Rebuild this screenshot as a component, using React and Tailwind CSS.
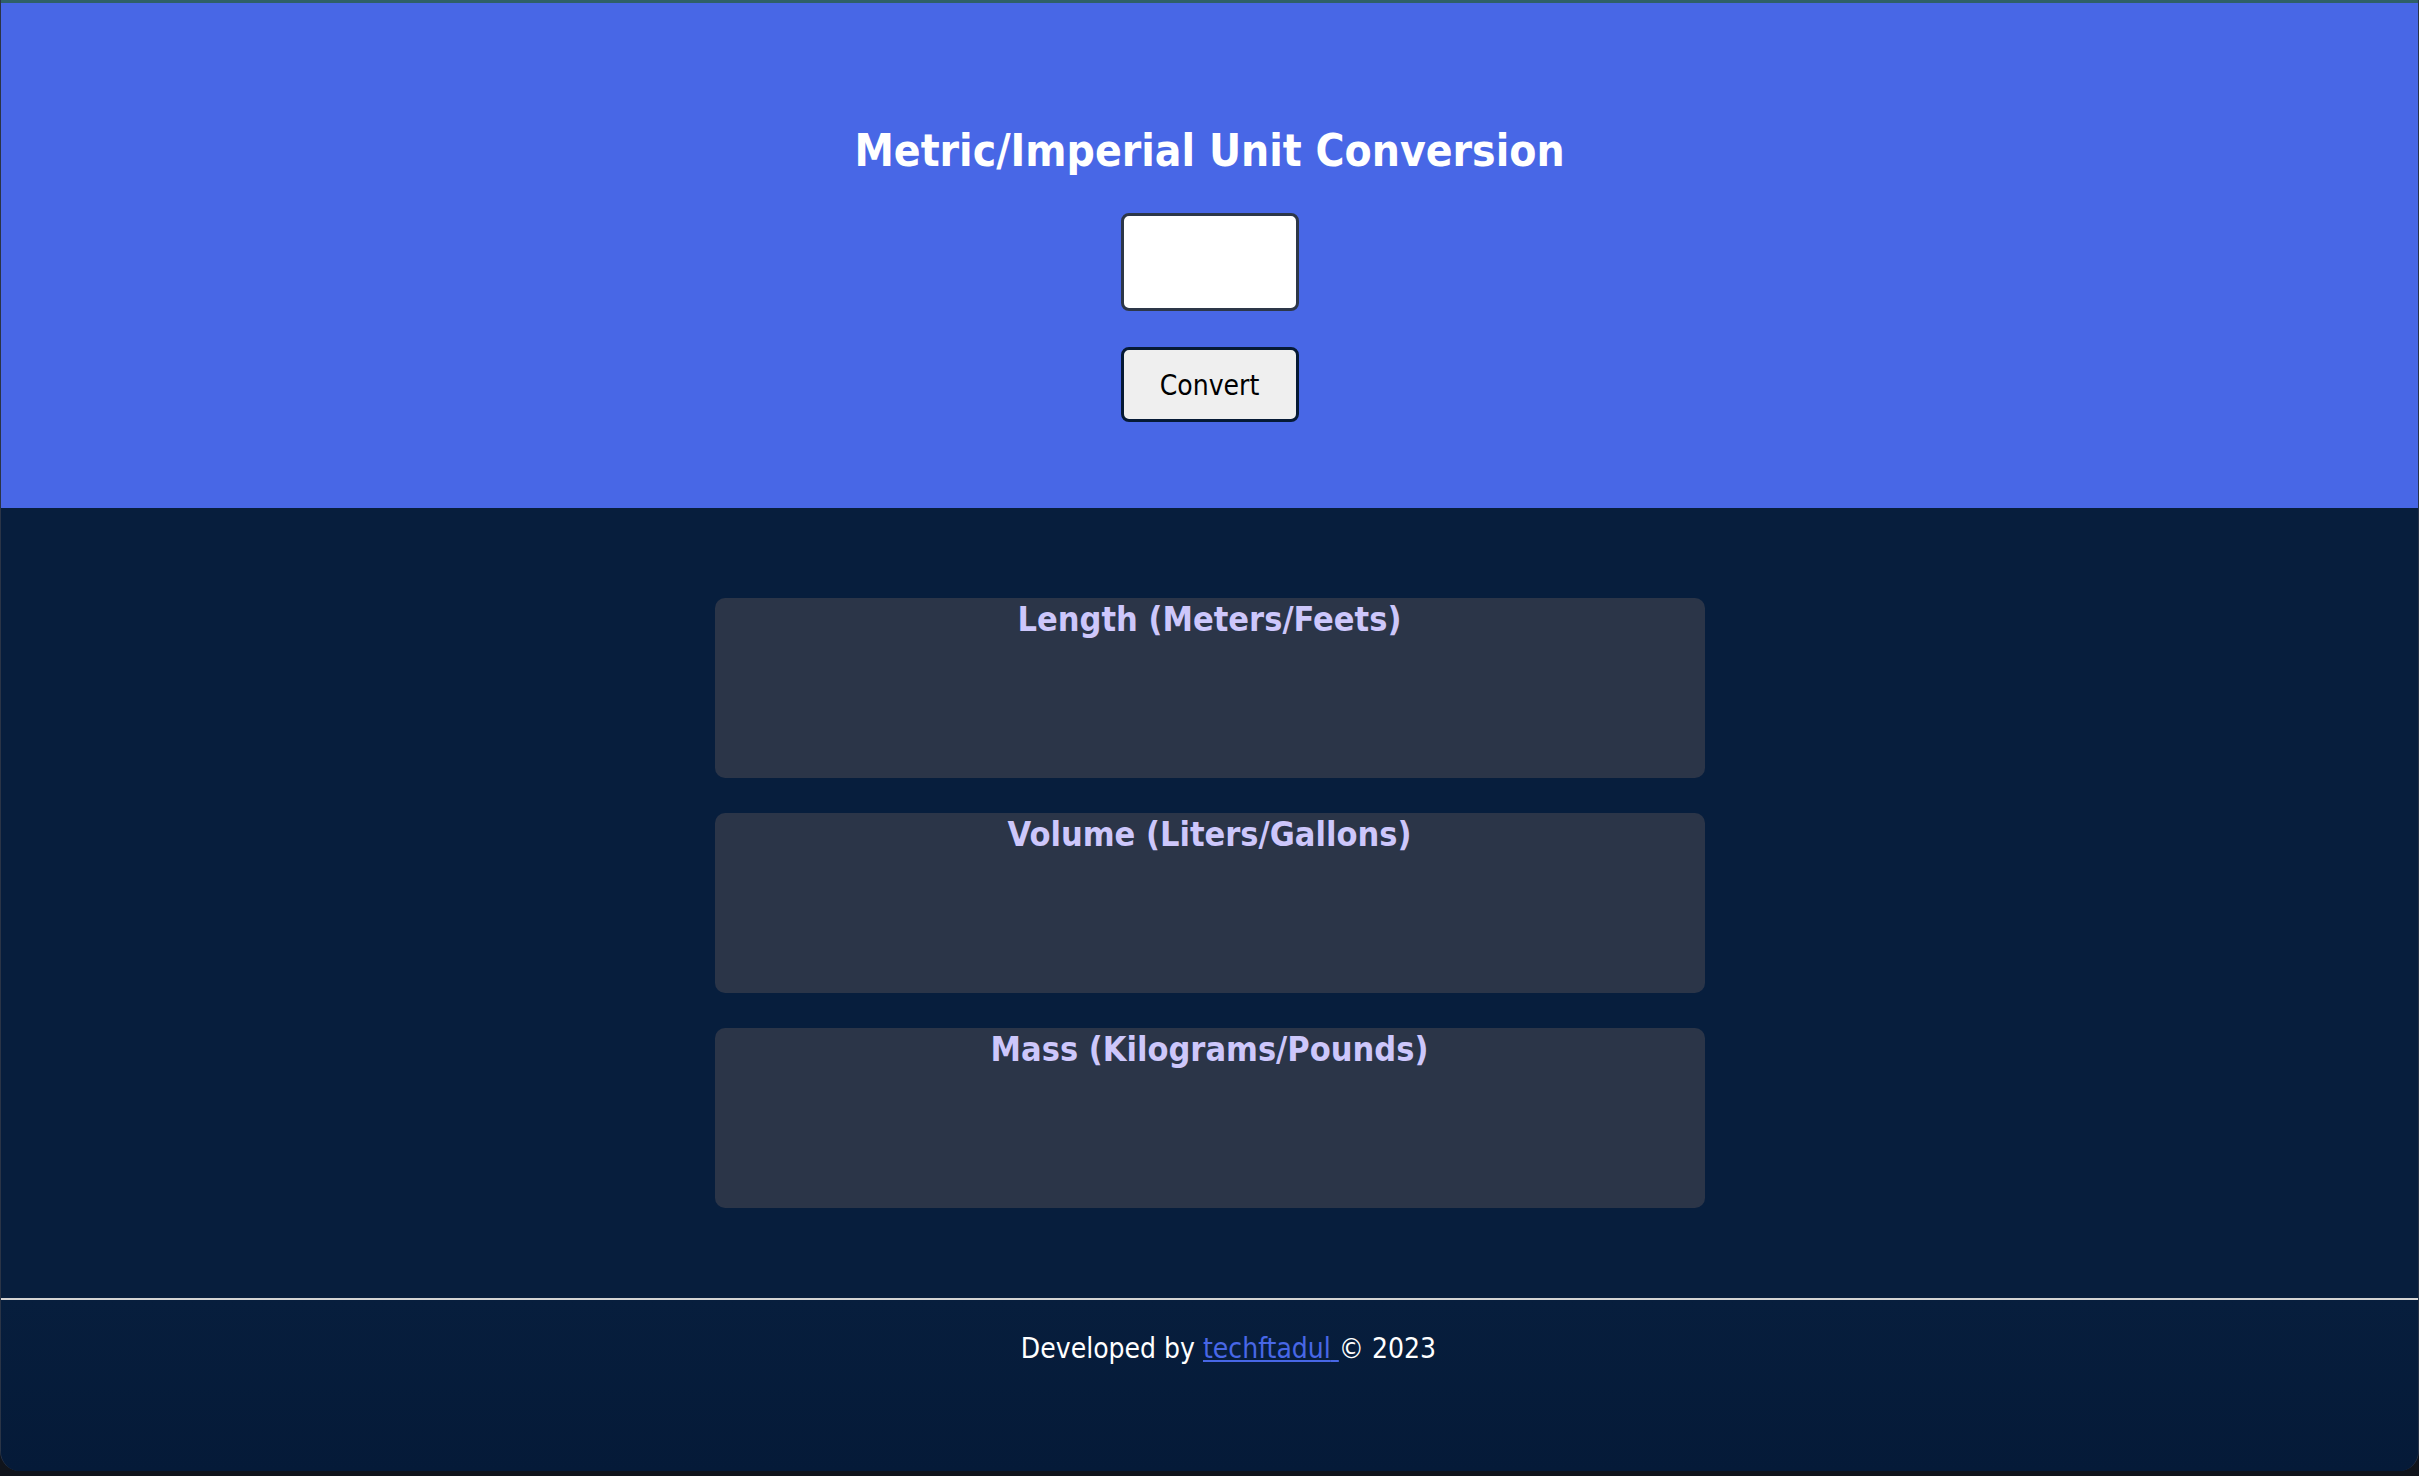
export default function App() {
  const cards = [
    "Length (Meters/Feets)",
    "Volume (Liters/Gallons)",
    "Mass (Kilograms/Pounds)",
  ];

  return (
    <div className="h-[1476px] w-full overflow-hidden bg-[#10141c] font-['DejaVu_Sans_Condensed','DejaVu_Sans',sans-serif]">
      <div className="flex h-[1471px] flex-col overflow-hidden rounded-b-[20px] border-x border-[#2a3446] bg-[#071e3d]">
        {/* window top edge */}
        <div className="h-[3px] shrink-0 bg-[#2f6068]" />

        {/* Header */}
        <header className="flex h-[505px] shrink-0 flex-col items-center bg-[#4867e6]">
          <h1 className="mt-[121px] text-[44px] font-bold leading-[54px] text-white">
            Metric/Imperial Unit Conversion
          </h1>
          <input
            type="text"
            className="mt-[35px] h-[98px] w-[178px] rounded-[8px] border-[3px] border-[#2d3748] bg-white px-3 text-[28px] outline-none"
          />
          <button className="mt-[36px] h-[75px] w-[178px] rounded-[8px] border-[3px] border-[#061a35] bg-[#efefef] pt-[2px] text-[28px] text-black">
            Convert
          </button>
        </header>

        {/* Results */}
        <main className="flex flex-col items-center gap-[35px] pb-[90px] pt-[90px]">
          {cards.map((title) => (
            <section
              key={title}
              className="h-[180px] w-[990px] rounded-[10px] bg-[#2b3548] text-center"
            >
              <h2 className="pt-[1px] text-[34px] font-bold leading-[40px] text-[#cdc7fb]">
                {title}
              </h2>
            </section>
          ))}
        </main>

        {/* Footer */}
        <footer className="flex-1 border-t-2 border-[#d4d4d4] bg-gradient-to-b from-[#071e3d] to-[#051a38] pl-[38px] pt-[31px] text-center">
          <p className="text-[28px] leading-[36px] text-white">
            Developed by{" "}
            <a href="#" className="text-[#4867e6] underline">
              techftadul{" "}
            </a>
            © 2023
          </p>
        </footer>
      </div>
    </div>
  );
}
